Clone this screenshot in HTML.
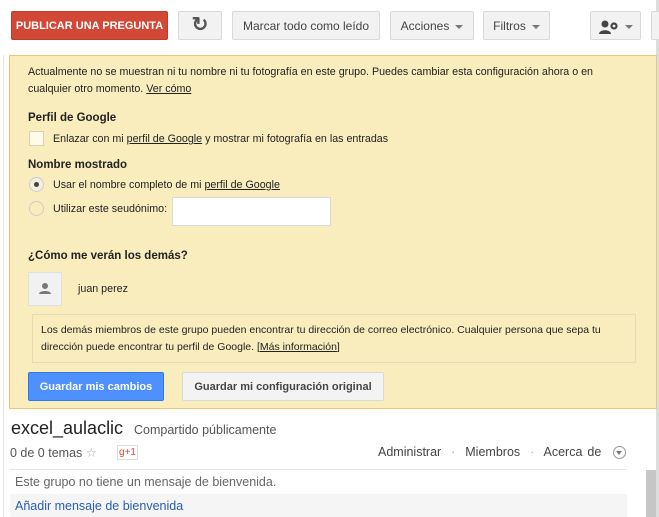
<!DOCTYPE html>
<html><head><meta charset="utf-8"><style>
*{box-sizing:border-box;margin:0;padding:0}
body{width:659px;height:517px;background:#fff;font-family:"Liberation Sans",Arial,sans-serif;position:relative;overflow:hidden;color:#222}
.a{position:absolute}
.btn{position:absolute;top:11px;height:29px;border:1px solid #d9d9d9;border-radius:2px;background:#f2f2f2;color:#444;font-size:12px;line-height:28px;text-align:center}
.caret{display:inline-block;width:0;height:0;border-left:4px solid transparent;border-right:4px solid transparent;border-top:4px solid #777;vertical-align:middle;margin-left:6px}
.t{font-size:10.7px;color:#222;position:absolute}
u{text-decoration:underline}
.h{font-size:11.5px;font-weight:bold;color:#222;position:absolute}
</style></head><body>
<div class="a" style="left:3px;top:55px;width:1px;height:462px;background:#e5e5e5"></div>
<div class="a" style="left:656px;top:0;width:3px;height:517px;background:#ddd"></div>
<div class="btn" style="left:11px;width:157px;background:#d14836;border-color:#c53727;color:#fff;font-weight:bold;font-size:11px">PUBLICAR UNA PREGUNTA</div>
<div class="btn" style="left:178px;width:44px;font-size:20px;font-weight:bold;color:#555;line-height:26px">&#x21bb;</div>
<div class="btn" style="left:232px;width:148px">Marcar todo como leído</div>
<div class="btn" style="left:390px;width:84px">Acciones<span class="caret"></span></div>
<div class="btn" style="left:483px;width:67px">Filtros<span class="caret"></span></div>
<div class="btn" style="left:590px;width:51px"><svg width="22" height="14" viewBox="0 0 22 14" style="vertical-align:middle"><circle cx="6" cy="4" r="3.5" fill="#444"/><path d="M0 14c0-5 12-5 12 0z" fill="#444"/><circle cx="15" cy="6" r="2.5" fill="none" stroke="#444" stroke-width="2.2"/></svg><span class="caret" style="margin-left:4px"></span></div>
<div class="btn" style="left:651px;width:20px"></div>

<div class="a" style="left:9px;top:55px;width:648px;height:354px;background:#f9edbe;border:1px solid #f0c36d"></div>
<div class="t" style="left:28px;top:64px;width:600px;line-height:17px">Actualmente no se muestran ni tu nombre ni tu fotografía en este grupo. Puedes cambiar esta configuración ahora o en cualquier otro momento. <u>Ver cómo</u></div>
<div class="h" style="left:28px;top:112px">Perfil de Google</div>
<div class="a" style="left:29px;top:131px;width:15px;height:15px;background:#fffbe8;border:1px solid #d8d0b0"></div>
<div class="t" style="left:53px;top:133px">Enlazar con mi <u>perfil de Google</u> y mostrar mi fotografía en las entradas</div>
<div class="h" style="left:28px;top:159px">Nombre mostrado</div>
<div class="a" style="left:29px;top:177px;width:15px;height:15px;border-radius:50%;background:#f5efdc;border:1px solid #ccc"><div class="a" style="left:4px;top:4px;width:5px;height:5px;border-radius:50%;background:#444"></div></div>
<div class="t" style="left:53px;top:179px">Usar el nombre completo de mi <u>perfil de Google</u></div>
<div class="a" style="left:29px;top:201px;width:15px;height:15px;border-radius:50%;border:1px solid #ccc"></div>
<div class="t" style="left:53px;top:203px">Utilizar este seudónimo:</div>
<div class="a" style="left:172px;top:197px;width:159px;height:29px;background:#fff;border:1px solid #d9d9d9"></div>
<div class="h" style="left:28px;top:250px">¿Cómo me verán los demás?</div>
<div class="a" style="left:28px;top:272px;width:34px;height:34px;background:#f1f1f1;border:1px solid #e0e0e0"><svg width="32" height="32" viewBox="0 0 32 32"><circle cx="16" cy="13" r="3" fill="#777"/><path d="M10 21c0-4 12-4 12 0z" fill="#777"/></svg></div>
<div class="t" style="left:78px;top:283px">juan perez</div>
<div class="a" style="left:32px;top:314px;width:604px;height:49px;border:1px solid #e5dcb5"></div>
<div class="t" style="left:41px;top:322px;width:590px;line-height:17px;font-size:10.5px">Los demás miembros de este grupo pueden encontrar tu dirección de correo electrónico. Cualquier persona que sepa tu dirección puede encontrar tu perfil de Google. [<u>Más información</u>]</div>
<div class="a" style="left:28px;top:372px;width:136px;height:29px;background:#4d90fe;border:1px solid #3079ed;border-radius:2px;color:#fff;font-weight:bold;font-size:11px;line-height:29px;text-align:center">Guardar mis cambios</div>
<div class="a" style="left:182px;top:372px;width:202px;height:29px;background:#f3f3f3;border:1px solid #d9d9d9;border-radius:2px;color:#444;font-weight:bold;font-size:11px;line-height:29px;text-align:center">Guardar mi configuración original</div>

<div class="a" style="left:11px;top:418px;font-size:18px;color:#222">excel_aulaclic</div>
<div class="a" style="left:134px;top:423px;font-size:12.5px;color:#555">Compartido públicamente</div>
<div class="a" style="left:10px;top:445px;font-size:12.5px;color:#555">0 de 0 temas <span style="color:#aaa">☆</span></div>
<div class="a" style="left:117px;top:445px;width:21px;height:15px;border:1px solid #ddd;font-size:10px;color:#dd4b39;text-align:center;line-height:13px">g+1</div>
<div class="a" style="left:378px;top:445px;font-size:12.5px;color:#444;word-spacing:1.5px">Administrar &nbsp;<span style="color:#aaa">·</span>&nbsp; Miembros &nbsp;<span style="color:#aaa">·</span>&nbsp; Acerca de</div>
<div class="a" style="left:613px;top:446px;width:13px;height:13px;border:1px solid #999;border-radius:50%"><div class="a" style="left:2px;top:4px;border-left:3.5px solid transparent;border-right:3.5px solid transparent;border-top:4px solid #777"></div></div>
<div class="a" style="left:10px;top:469px;width:617px;height:1px;background:#e5e5e5"></div>
<div class="a" style="left:15px;top:475px;font-size:12.5px;color:#666">Este grupo no tiene un mensaje de bienvenida.</div>
<div class="a" style="left:10px;top:494px;width:617px;height:23px;background:#f5f5f5"></div>
<div class="a" style="left:15px;top:499px;font-size:12.5px;color:#2a5db0">Añadir mensaje de bienvenida</div>
<div class="a" style="left:646px;top:470px;width:10px;height:47px;background:#c6c6c6"></div>
</body></html>
